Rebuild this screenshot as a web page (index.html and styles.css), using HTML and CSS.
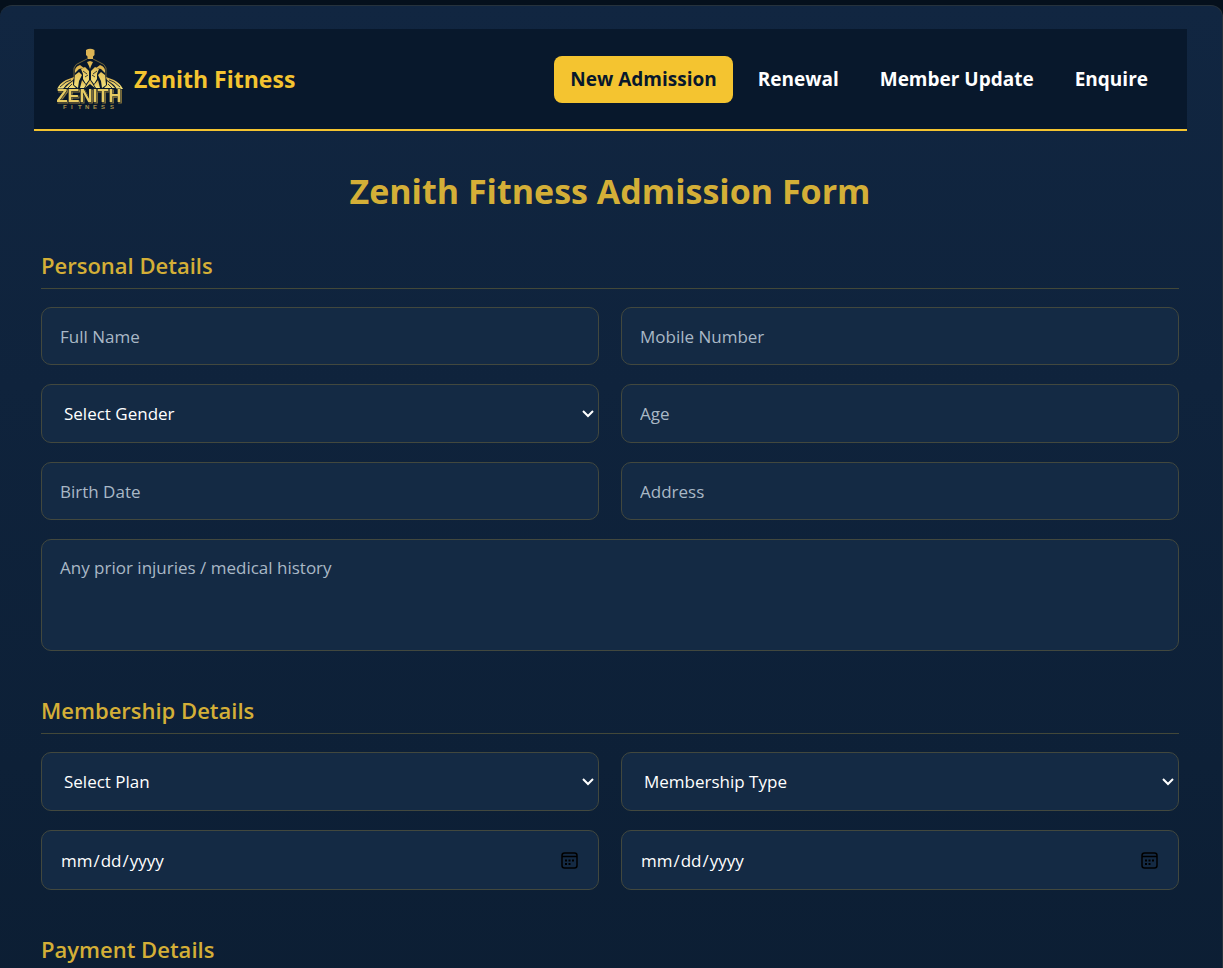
FILE: index.html
```html
<!DOCTYPE html>
<html lang="en">
<head>
    <meta charset="UTF-8">
    <meta name="viewport" content="width=device-width, initial-scale=1.0">
    <title>Zenith Fitness Admission Form</title>
    <link rel="stylesheet" href="styles.css">
</head>
<body>
    <div class="container">
        <header class="navbar">
            <div class="brand">
                <svg class="logo" viewBox="0 0 70 64" role="img" aria-label="Zenith Fitness logo">
                    <defs>
                        <linearGradient id="gold" x1="0" y1="0" x2="0" y2="1">
                            <stop offset="0" stop-color="#dcb04a"/>
                            <stop offset="1" stop-color="#f3e27c"/>
                        </linearGradient>
                    </defs>
                    <!-- head -->
                    <path d="M32 3Q36 .5 40.500 3V8L39 9.500V12H33.500V9.500L32 8Z" fill="#dcb455"/>
                    <!-- shoulders outline -->
                    <path d="M33 12L27 15Q21 17 20 21L20 32M39 12L45 15Q51 17 52 21L52 32" fill="none" stroke="#8d783c" stroke-width=".8"/>
                    <!-- shoulders and arms -->
                    <path d="M26 18Q20 20 21 26L25 22L30 21ZM46 18Q52 20 51 26L47 22L42 21ZM21 28L25 25L28 28L25 34L24 41L20 38ZM51 28L47 25L44 28L47 34L48 41L52 38Z" fill="url(#gold)"/>
                    <!-- back -->
                    <path d="M27 22L31 20L35 24V33L32 37L29 32L29 27ZM45 22L41 20L37 24V33L40 37L43 32L43 27ZM33 15L36 14L39 15L37 19L36 22L35 19Z" fill="url(#gold)"/>
                    <path d="M26 41L28 33L32 38L30 41ZM46 41L44 33L40 38L42 41ZM31 41L34 36L36 33L38 36L41 41L36 37Z" fill="url(#gold)"/>
                    <path d="M29 24L33 27M43 24L39 27M31 30L34 28M41 30L38 28" fill="none" stroke="#08182c" stroke-width=".8"/>
                    <!-- legs -->
                    <path d="M3 42Q6 36 12 33L20 30L19 33L12 38L9 42ZM11 41L15 37L19 34L19 38L22 41ZM69 42Q66 36 60 33L52 30L53 33L60 38L63 42ZM61 41L57 37L53 34L53 38L50 41Z" fill="url(#gold)"/>
                    <path d="M6 40L12 35L17 33M66 40L60 35L55 33M14 41L18 37M58 41L54 37" fill="none" stroke="#08182c" stroke-width=".8"/>
                    <!-- wordmark -->
                    <text class="wordmark" x="35" y="55">ZENITH</text>
                    <text class="tagline" y="62" x="9 17 24 31 39 47 56">FITNESS</text>
                </svg>
                <span class="brand-name">Zenith Fitness</span>
            </div>
            <nav class="nav-links">
                <a href="#" class="active">New Admission</a>
                <a href="#">Renewal</a>
                <a href="#">Member Update</a>
                <a href="#">Enquire</a>
            </nav>
        </header>

        <form class="admission-form">
            <h1>Zenith Fitness Admission Form</h1>

            <section>
                <h2>Personal Details</h2>
                <div class="grid">
                    <input type="text" placeholder="Full Name" aria-label="Full Name">
                    <input type="tel" placeholder="Mobile Number" aria-label="Mobile Number">
                    <select aria-label="Gender">
                        <option>Select Gender</option>
                        <option>Male</option>
                        <option>Female</option>
                        <option>Other</option>
                    </select>
                    <input type="text" placeholder="Age" aria-label="Age">
                    <input type="text" placeholder="Birth Date" aria-label="Birth Date">
                    <input type="text" placeholder="Address" aria-label="Address">
                    <textarea class="full" placeholder="Any prior injuries / medical history" aria-label="Medical history"></textarea>
                </div>
            </section>

            <section>
                <h2>Membership Details</h2>
                <div class="grid">
                    <select aria-label="Plan">
                        <option>Select Plan</option>
                    </select>
                    <select aria-label="Membership Type">
                        <option>Membership Type</option>
                    </select>
                    <input type="date" aria-label="Start date">
                    <input type="date" aria-label="End date">
                </div>
            </section>

            <section>
                <h2>Payment Details</h2>
            </section>
        </form>
    </div>
</body>
</html>
```
FILE: styles.css
```css
* {
    box-sizing: border-box;
}

body {
    margin: 0;
    background: #05101c;
    color: #fff;
    font-family: "Segoe UI", "Open Sans", "Noto Sans", sans-serif;
}

.container {
    margin-top: 5px;
    padding: 23px 35px 0 34px;
    border: 1px solid #26323c;
    border-left: 0;
    border-radius: 12px;
    background: linear-gradient(#112641, #0d2037 75%, #0c1e33);
}

/* Header */
.navbar {
    display: flex;
    justify-content: space-between;
    align-items: center;
    height: 102px;
    padding: 0 23px 0 20px;
    background: #08182c;
    border-bottom: 2px solid #f4c430;
}

.brand {
    display: flex;
    align-items: center;
    gap: 10px;
}

.logo {
    width: 70px;
    height: 64px;
}

.wordmark {
    fill: #e6cb62;
    stroke: #08182c;
    stroke-width: 1px;
    paint-order: stroke;
    text-anchor: middle;
    font: bold 18px "Liberation Sans", Arial, sans-serif;
    filter: drop-shadow(1px 1px 0 #8d783c);
}

.tagline {
    fill: #a8904a;
    font: bold 6px "Liberation Sans", Arial, sans-serif;
}

.brand-name {
    color: #f4c430;
    font-size: 23px;
    font-weight: 700;
}

.nav-links {
    display: flex;
    gap: 9px;
}

.nav-links a {
    padding: 10px 16px;
    border-radius: 8px;
    color: #fff;
    font-size: 19px;
    font-weight: 700;
    line-height: 27px;
    text-decoration: none;
}

.nav-links a.active {
    background: #f4c430;
    color: #08182c;
}

/* Form */
.admission-form {
    padding: 35px 8px 0 7px;
}

h1 {
    margin: 0 0 34px;
    color: #d4af37;
    font-size: 34px;
    line-height: 50px;
    text-align: center;
}

h2 {
    margin: 0 0 18px;
    padding-bottom: 7px;
    border-bottom: 1px solid #434839;
    color: #d4af37;
    font-size: 22px;
    font-weight: 600;
    line-height: 31px;
}

section {
    margin-bottom: 44px;
}

.grid {
    display: grid;
    grid-template-columns: 1fr 1fr;
    gap: 19px 22px;
}

input,
select,
textarea {
    width: 100%;
    min-height: 58px;
    padding: 14px 18px;
    border: 1px solid #42483e;
    border-radius: 10px;
    background: #142a44;
    color: #fff;
    font-family: inherit;
    font-size: 17px;
}

select {
    min-height: 59px;
    padding-left: 22px;
    appearance: none;
    background: #142a44 url("data:image/svg+xml,%3Csvg xmlns='http://www.w3.org/2000/svg' width='12' height='8'%3E%3Cpath d='M1 1l5 5 5-5' fill='none' stroke='white' stroke-width='2'/%3E%3C/svg%3E") no-repeat right 4px center;
}

input[type="date"] {
    min-height: 60px;
}

::-webkit-calendar-picker-indicator {
    width: 17px;
    height: 17px;
    padding: 0;
    margin-right: 2px;
    background: url("data:image/svg+xml,%3Csvg xmlns='http://www.w3.org/2000/svg' width='17' height='17'%3E%3Crect x='1' y='1' width='15' height='15' rx='2.500' fill='none' stroke='black' stroke-width='1.500'/%3E%3Cpath d='M1 4.500h15' stroke='black' stroke-width='1.500'/%3E%3Cpath d='M4 8.500h2m1.500 0h2m1.500 0h2M4 12h2m1.500 0h2' stroke='black' stroke-width='2'/%3E%3C/svg%3E") no-repeat center;
}

textarea {
    display: block;
    height: 112px;
    padding-top: 16px;
    resize: none;
}

.full {
    grid-column: 1 / -1;
}

::placeholder {
    color: #a9b8c6;
}
```
